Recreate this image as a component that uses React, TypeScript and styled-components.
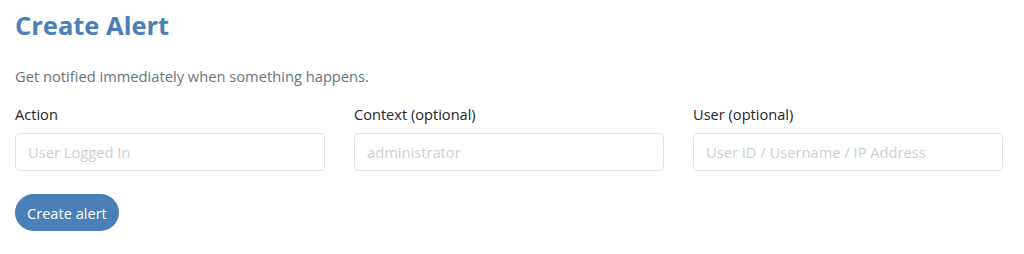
import React from "react"
import styled, { createGlobalStyle } from "styled-components"

const GlobalStyle = createGlobalStyle`
  body {
    margin: 0;
    background: #ffffff;
    font-family: "Open Sans", "Noto Sans", sans-serif;
  }
`

const Page = styled.div`
  padding: 7px 21px 0 15px;
`

const Title = styled.h1`
  margin: 0;
  font-size: 25.5px;
  line-height: 36px;
  font-weight: 700;
  color: #4a7fb7;
`

const Lead = styled.p`
  margin: 23px 0 0;
  font-size: 14.7px;
  line-height: 20px;
  color: #6b737c;
`

const Fields = styled.div`
  display: grid;
  grid-template-columns: repeat(3, 1fr);
  column-gap: 29px;
  margin-top: 18px;
`

const Field = styled.label`
  display: flex;
  flex-direction: column;
  gap: 9px;
`

const LabelText = styled.span`
  font-size: 14.6px;
  line-height: 20px;
  color: #252525;
`

const Input = styled.input`
  box-sizing: border-box;
  height: 38px;
  width: 100%;
  padding: 0 12px;
  border: 1px solid #dfe4ea;
  border-radius: 4px;
  font-family: inherit;
  font-size: 14.7px;
  color: #252525;
  outline: none;

  &::placeholder {
    color: #cbcfd4;
  }
`

const Button = styled.button`
  margin-top: 23px;
  height: 37px;
  padding: 0 12px;
  border: none;
  border-radius: 19px;
  background: #4a7fb7;
  color: #ffffff;
  font-family: inherit;
  font-size: 14.6px;
  cursor: pointer;
`

const fields = [
  { label: "Action", placeholder: "User Logged In" },
  { label: "Context (optional)", placeholder: "administrator" },
  { label: "User (optional)", placeholder: "User ID / Username / IP Address" },
]

const App = () => (
  <Page>
    <GlobalStyle />
    <Title>Create Alert</Title>
    <Lead>Get notified immediately when something happens.</Lead>
    <Fields>
      {fields.map((f) => (
        <Field key={f.label}>
          <LabelText>{f.label}</LabelText>
          <Input placeholder={f.placeholder} />
        </Field>
      ))}
    </Fields>
    <Button>Create alert</Button>
  </Page>
)

export default App
